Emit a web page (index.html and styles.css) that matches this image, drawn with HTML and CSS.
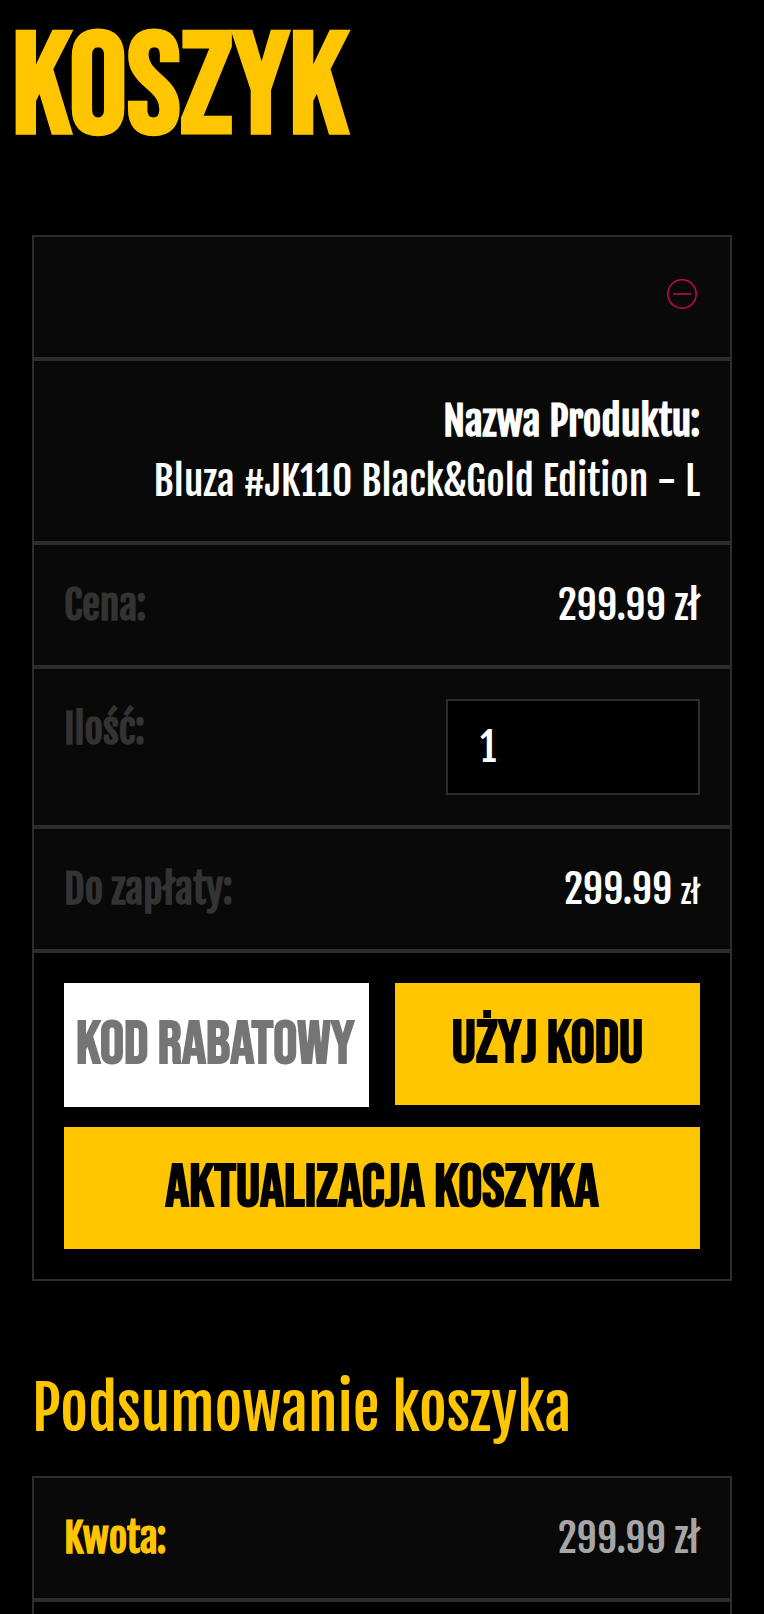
FILE: index.html
```html
<!DOCTYPE html>
<html lang="pl">
<head>
  <meta charset="UTF-8">
  <meta name="viewport" content="width=device-width, initial-scale=1.0">
  <title>Koszyk</title>
  <link rel="stylesheet" href="styles.css">
</head>
<body>
  <h1 class="page-title">KOSZYK</h1>

  <main class="cart">
    <form>
      <table class="shop-table">
        <tbody>
          <tr class="product-remove">
            <td>
              <a class="remove" href="#" aria-label="Usuń">
                <svg viewBox="0 0 36 36" fill="none" stroke="currentColor">
                  <circle cx="18" cy="18" r="14.2" stroke-width="1.5"/>
                  <path d="M9 18h18" stroke-width="2" opacity="0.75"/>
                </svg>
              </a>
            </td>
          </tr>
          <tr class="product-name">
            <th scope="row">Nazwa Produktu:</th>
            <td>Bluza #JK110 Black&amp;Gold Edition - L</td>
          </tr>
          <tr>
            <th scope="row">Cena:</th>
            <td>299.99 zł</td>
          </tr>
          <tr>
            <th scope="row"><label for="qty">Ilość:</label></th>
            <td><input class="qty" id="qty" type="text" inputmode="numeric" value="1"></td>
          </tr>
          <tr>
            <th scope="row">Do zapłaty:</th>
            <td>299.99 <span class="currency">zł</span></td>
          </tr>
          <tr class="actions">
            <td>
              <input class="coupon" type="text" placeholder="KOD RABATOWY" aria-label="Kod rabatowy">
              <button class="button" type="button">Użyj kodu</button>
              <button class="button update" type="button">AKTUALIZACJA KOSZYKA</button>
            </td>
          </tr>
        </tbody>
      </table>
    </form>

    <h2 class="totals-title">Podsumowanie koszyka</h2>
    <table class="shop-table totals">
      <tbody>
        <tr>
          <th scope="row">Kwota:</th>
          <td>299.99 zł</td>
        </tr>
        <tr class="next">
          <td></td>
        </tr>
      </tbody>
    </table>
  </main>
</body>
</html>
```
FILE: styles.css
```css
* { box-sizing: border-box; }

body {
  margin: 0;
  background: #000;
  color: #fff;
  font-family: "Fjalla One", "Liberation Sans Narrow", "Liberation Sans", sans-serif;
  font-size: 40px;
  line-height: 60px;
}

.page-title {
  margin: 0;
  padding: 15px 12px 70px;
  color: #ffc600;
  font-family: "Bebas Neue", "Liberation Sans Narrow", "Liberation Sans", sans-serif;
  font-size: 144px;
  font-weight: bold;
  line-height: 150px;
}

.cart {
  padding: 0 32px;
}

.shop-table,
.shop-table tbody {
  display: block;
}

.shop-table {
  border: 2px solid #2d2d2d;
}

.shop-table tr {
  display: flex;
  justify-content: space-between;
  padding: 30px;
  background: #090909;
  border-bottom: 4px solid #2d2d2d;
}

.shop-table tr:last-child {
  border-bottom: none;
}

.shop-table th,
.shop-table td {
  padding: 0;
}

.shop-table th {
  color: #333;
  text-align: left;
}

.shop-table .product-remove {
  justify-content: flex-end;
}

.remove {
  display: flex;
  align-items: center;
  height: 60px;
  padding-bottom: 6px;
  color: #c40d48;
}

.remove svg {
  width: 36px;
  height: 36px;
}

.shop-table .product-name {
  flex-direction: column;
  align-items: flex-end;
}

.product-name th {
  color: #fff;
}

.currency {
  font-size: 30px;
  line-height: 1;
}

.qty {
  display: block;
  width: 254px;
  height: 96px;
  padding: 0 32px;
  background: #000;
  border: 2px solid #2d2d2d;
  color: #fff;
  font: inherit;
}

.shop-table .actions {
  background: #000;
}

.actions td {
  flex: 1;
  display: grid;
  grid-template-columns: 1fr 1fr;
  align-items: start;
  column-gap: 26px;
  row-gap: 20px;
}

.coupon,
.button {
  width: 100%;
  border: none;
  border-radius: 0;
  font-family: "Bebas Neue", "Liberation Sans Narrow", "Liberation Sans", sans-serif;
  font-size: 60px;
  font-weight: bold;
}

.coupon {
  height: 124px;
  padding: 0 12px;
  background: #fff;
}

.coupon::placeholder {
  color: #757575;
}

.button {
  height: 122px;
  padding: 0;
  background: #ffc600;
  color: #000;
}

.update {
  grid-column: 1 / -1;
}

.totals-title {
  margin: 0;
  padding: 82px 0 23px;
  color: #ffc600;
  font-size: 60px;
  font-weight: normal;
  line-height: 90px;
}

.totals th {
  color: #ffc600;
}

.totals td {
  color: #a6a6a6;
}

.totals .next {
  padding: 6px;
  background: #000;
}

.shop-table.totals {
  border-bottom: none;
}
```
